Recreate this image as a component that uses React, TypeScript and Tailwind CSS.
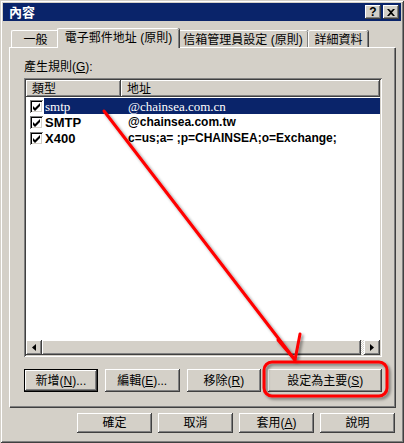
import React from "react";

const raised =
  "shadow-[inset_-1px_-1px_0_#404040,inset_1px_1px_0_#ffffff,inset_-2px_-2px_0_#808080,inset_2px_2px_0_#d4d0c8]";
const sunken =
  "shadow-[inset_1px_1px_0_#808080,inset_-1px_-1px_0_#ffffff,inset_2px_2px_0_#404040,inset_-2px_-2px_0_#d4d0c8]";

const cjk = "font-['Liberation_Sans','Noto_Sans_CJK_TC',sans-serif]";

function Btn({
  children,
  className = "",
  def = false,
}: {
  children: React.ReactNode;
  className?: string;
  def?: boolean;
}) {
  return (
    <div
      className={`flex items-center justify-center bg-[#d4d0c8] text-[12px] leading-none text-black ${
        def
          ? "border border-black shadow-[inset_-1px_-1px_0_#404040,inset_1px_1px_0_#ffffff,inset_-2px_-2px_0_#808080]"
          : raised
      } ${className}`}
    >
      {children}
    </div>
  );
}

function Check() {
  return (
    <div className="w-[13px] h-[13px] bg-white shrink-0 shadow-[inset_1px_1px_0_#808080,inset_-1px_-1px_0_#ffffff,inset_2px_2px_0_#000000,inset_-2px_-2px_0_#d4d0c8]">
      <svg width="13" height="13" viewBox="0 0 13 13">
        <path d="M3 6 L5 8 L10 3 L10 6 L5 11 L3 9 Z" fill="#000" />
      </svg>
    </div>
  );
}

function Tab({
  label,
  w,
  active = false,
}: {
  label: string;
  w: string;
  active?: boolean;
}) {
  return (
    <div
      className={`${w} relative flex items-center justify-center bg-[#d4d0c8] text-[12px] leading-none rounded-t-[2px] border-l border-t border-white shadow-[inset_-1px_0_0_#808080,1px_0_0_#404040] whitespace-nowrap ${
        active ? "h-[20px] -mx-[2px] z-10 -mb-[1px] pb-[1px]" : "h-[17px] pt-[2px]"
      }`}
    >
      {label}
    </div>
  );
}

export default function App() {
  return (
    <div
      className={`relative w-[404px] h-[443px] bg-[#d4d0c8] p-[3px] flex flex-col overflow-hidden ${cjk} shadow-[inset_1px_1px_0_#d4d0c8,inset_-1px_-1px_0_#404040,inset_2px_2px_0_#ffffff,inset_-2px_-2px_0_#808080]`}
    >
      {/* Title bar */}
      <div className="h-[18px] bg-[#0a246a] flex items-center pl-[6px] pr-[2px]">
        <span className="text-white font-bold text-[13px] leading-none">內容</span>
        <div className="ml-auto flex gap-[2px]">
          <div className={`w-[16px] h-[14px] bg-[#d4d0c8] ${raised} flex items-center justify-center`}>
            <span className="font-['Liberation_Sans',sans-serif] font-bold text-[12px] leading-none text-black">?</span>
          </div>
          <div className={`w-[16px] h-[14px] bg-[#d4d0c8] ${raised} flex items-center justify-center`}>
            <svg width="8" height="7" viewBox="0 0 8 7">
              <path d="M0 0 H2 L4 2 L6 0 H8 L5 3.5 L8 7 H6 L4 5 L2 7 H0 L3 3.5 Z" fill="#000" />
            </svg>
          </div>
        </div>
      </div>

      {/* Tabs + panel */}
      <div className="mt-[7px] mx-[6px] flex flex-col">
        <div className="h-[19px] flex items-end pl-[2px]">
          <Tab label="一般" w="w-[48px]" />
          <Tab label="電子郵件地址 (原則)" w="w-[122px]" active />
          <Tab label="信箱管理員設定 (原則)" w="w-[131px]" />
          <Tab label="詳細資料" w="w-[60px]" />
        </div>
        <div className="h-[360px] bg-[#d4d0c8] border-l border-t border-white shadow-[inset_-1px_-1px_0_#808080,1px_1px_0_#404040] pl-[14px] pr-[13px] pt-[11px] flex flex-col">
          <div className="text-[12px] leading-[16px] h-[16px]">
            產生規則(<u>G</u>):
          </div>
          <div className={`mt-[3px] h-[279px] bg-white ${sunken} p-[2px] flex flex-col`}>
            {/* header */}
            <div className="flex h-[17px] shrink-0 text-[12px] leading-none">
              <div className={`w-[95px] ${raised} bg-[#d4d0c8] flex items-center pl-[6px]`}>類型</div>
              <div className={`flex-1 ${raised} bg-[#d4d0c8] flex items-center pl-[6px]`}>地址</div>
            </div>
            <div className="flex flex-col pt-[1px] flex-1">
              <div className="h-[16px] flex items-center">
                <div className="w-[18px] pl-[4px] shrink-0"><Check /></div>
                <div className="flex-1 h-full bg-[#0a246a] text-white flex items-center font-['Liberation_Serif',serif] text-[13px] leading-none">
                  <span className="w-[84px] pl-[1px]">smtp</span>
                  <span>@chainsea.com.cn</span>
                </div>
              </div>
              <div className="h-[16px] flex items-center font-['Liberation_Sans',sans-serif] font-bold text-[13px] leading-none">
                <div className="w-[18px] pl-[4px] shrink-0"><Check /></div>
                <span className="w-[84px] pl-[1px]">SMTP</span>
                <span className="text-[12px]">@chainsea.com.tw</span>
              </div>
              <div className="h-[16px] flex items-center font-['Liberation_Sans',sans-serif] font-bold text-[13px] leading-none">
                <div className="w-[18px] pl-[4px] shrink-0"><Check /></div>
                <span className="w-[84px] pl-[1px]">X400</span>
                <span className="text-[12px]">c=us;a= ;p=CHAINSEA;o=Exchange;</span>
              </div>
            </div>
            {/* scrollbar */}
            <div className="h-[15px] shrink-0 flex bg-[#d4d0c8]">
              <div className={`w-[16px] ${raised} bg-[#d4d0c8] flex items-center justify-center`}>
                <svg width="4" height="7" viewBox="0 0 4 7"><path d="M4 0 V7 L0 3.5 Z" fill="#000" /></svg>
              </div>
              <div className={`flex-1 ${raised} bg-[#d4d0c8]`} />
              <div className="w-[3px] bg-[repeating-conic-gradient(#ffffff_0_25%,#d4d0c8_0_50%)] bg-[length:2px_2px]" />
              <div className={`w-[16px] ${raised} bg-[#d4d0c8] flex items-center justify-center`}>
                <svg width="4" height="7" viewBox="0 0 4 7"><path d="M0 0 V7 L4 3.5 Z" fill="#000" /></svg>
              </div>
            </div>
          </div>
          <div className="mt-[12px] flex gap-[7px] h-[23px]">
            <Btn def className="w-[74px]">新增(<u>N</u>)...</Btn>
            <Btn className="w-[75px]">編輯(<u>E</u>)...</Btn>
            <Btn className="w-[75px]">移除(<u>R</u>)</Btn>
            <Btn className="w-[114px]">設定為主要(<u>S</u>)</Btn>
          </div>
        </div>
      </div>

      {/* Bottom buttons */}
      <div className="mt-[6px] flex justify-end gap-[6px] pr-[6px] h-[20px]">
        <Btn className="w-[75px]">確定</Btn>
        <Btn className="w-[75px]">取消</Btn>
        <Btn className="w-[75px]">套用(<u>A</u>)</Btn>
        <Btn className="w-[75px]">說明</Btn>
      </div>

      {/* Red annotation overlay */}
      <svg className="absolute left-0 top-0 pointer-events-none" width="404" height="443" viewBox="0 0 404 443">
        <defs>
          <filter id="sh" x="-20%" y="-20%" width="140%" height="140%">
            <feDropShadow dx="2" dy="2" stdDeviation="1.5" floodColor="#000" floodOpacity="0.45" />
          </filter>
        </defs>
        <g filter="url(#sh)" stroke="#ff0000" fill="none" strokeLinecap="round" strokeLinejoin="round">
          <path d="M104 111 L295 360" strokeWidth="3" />
          <path d="M278 340 L295 360 L300 334" strokeWidth="3" />
          <rect x="264" y="362" width="123" height="34" rx="8" strokeWidth="3" />
        </g>
      </svg>
    </div>
  );
}
